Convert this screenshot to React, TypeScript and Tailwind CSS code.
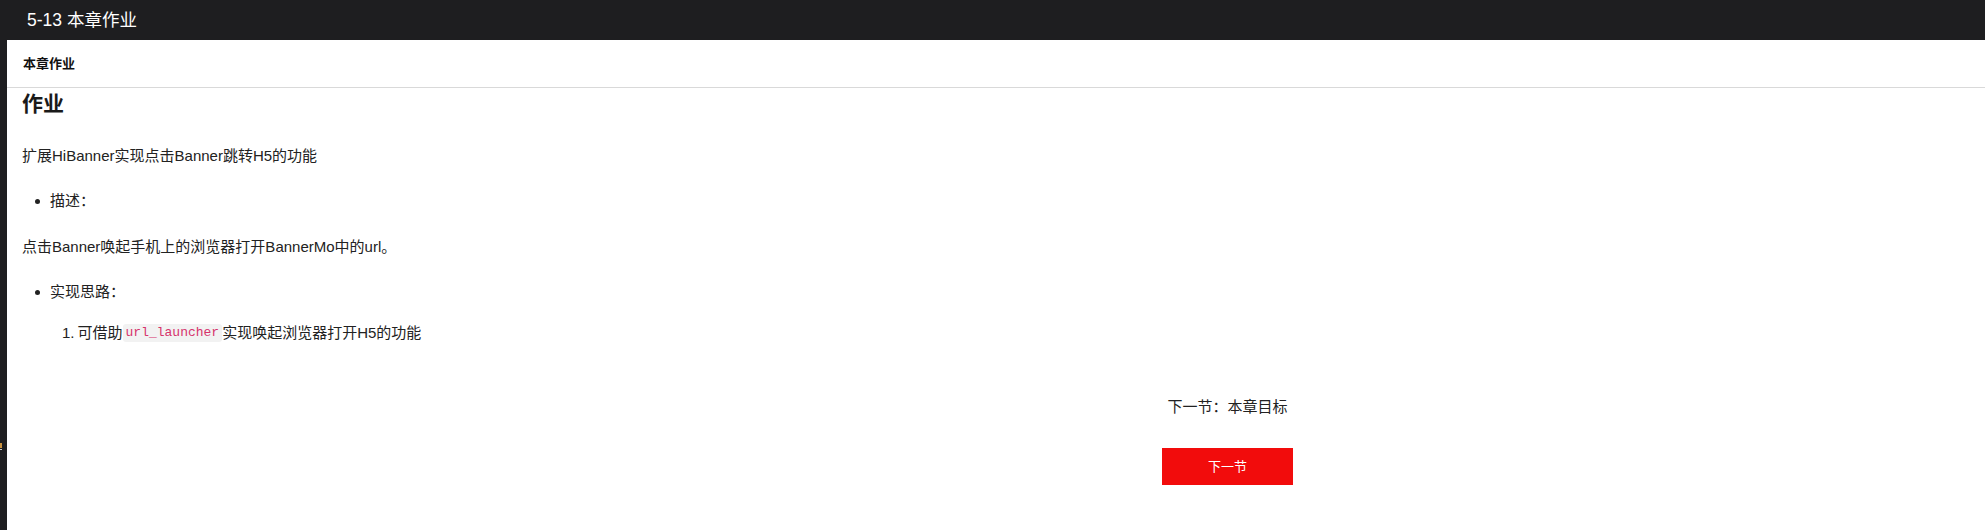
import React from "react";

export default function App() {
  return (
    <div
      className="w-[1985px] h-[530px] flex flex-col bg-[#1e1e20] overflow-hidden"
      style={{ fontFamily: '"Liberation Sans", "Noto Sans CJK SC", sans-serif' }}
    >
      <div className="h-[40px] shrink-0 flex items-center pl-[27px] text-white text-[17.5px]">
        5-13 本章作业
      </div>
      <div className="flex flex-1 min-h-0">
        <div className="w-[7px] shrink-0 relative">
          <div className="absolute left-0 top-[403px] w-[2px] h-[5px] bg-[#c8913f]" />
          <div className="absolute left-0 top-[409px] w-[2px] h-[1px] bg-[#ccc]" />
        </div>
        <div className="flex-1 bg-white flex flex-col text-[#222]">
          <div className="h-[48px] shrink-0 flex items-center pl-[16px] text-[13px] font-bold border-b border-[#d9d9d9] text-[#111]">
            本章作业
          </div>
          <div className="pl-[15px] flex flex-col">
            <h1 className="text-[21px] font-bold leading-[26px] mt-[3px] text-[#1a1a1a]">作业</h1>
            <p className="text-[15px] leading-[20px] mt-[29px]">扩展HiBanner实现点击Banner跳转H5的功能</p>
            <ul className="mt-[25px] text-[15px] leading-[20px]">
              <li className="flex items-center">
                <span className="w-[5px] h-[5px] rounded-full bg-[#222] ml-[13px] mr-[10px]" />
                描述：
              </li>
            </ul>
            <p className="text-[15px] leading-[20px] mt-[26px]">点击Banner唤起手机上的浏览器打开BannerMo中的url。</p>
            <ul className="mt-[25px] text-[15px] leading-[20px]">
              <li className="flex items-center">
                <span className="w-[5px] h-[5px] rounded-full bg-[#222] ml-[13px] mr-[10px]" />
                实现思路：
              </li>
            </ul>
            <ol className="mt-[21px] text-[15px] leading-[20px] pl-[40px]">
              <li className="flex items-center">
                <span className="mr-[3px]">1.</span>
                可借助
                <code
                  className="px-[3px] h-[18px] flex items-center rounded-[3px] bg-[#f2f2f2] text-[#d6336c] text-[13px]"
                  style={{ fontFamily: '"Liberation Mono", monospace' }}
                >
                  url_launcher
                </code>
                实现唤起浏览器打开H5的功能
              </li>
            </ol>
            <div className="flex flex-col items-center mt-[54px] ml-[1140px] w-[131px]">
              <div className="text-[15px] leading-[20px] text-[#222] whitespace-nowrap">下一节：本章目标</div>
              <button className="mt-[31px] w-[131px] h-[37px] bg-[#f20c0c] text-white text-[13px]">下一节</button>
            </div>
          </div>
        </div>
      </div>
    </div>
  );
}
